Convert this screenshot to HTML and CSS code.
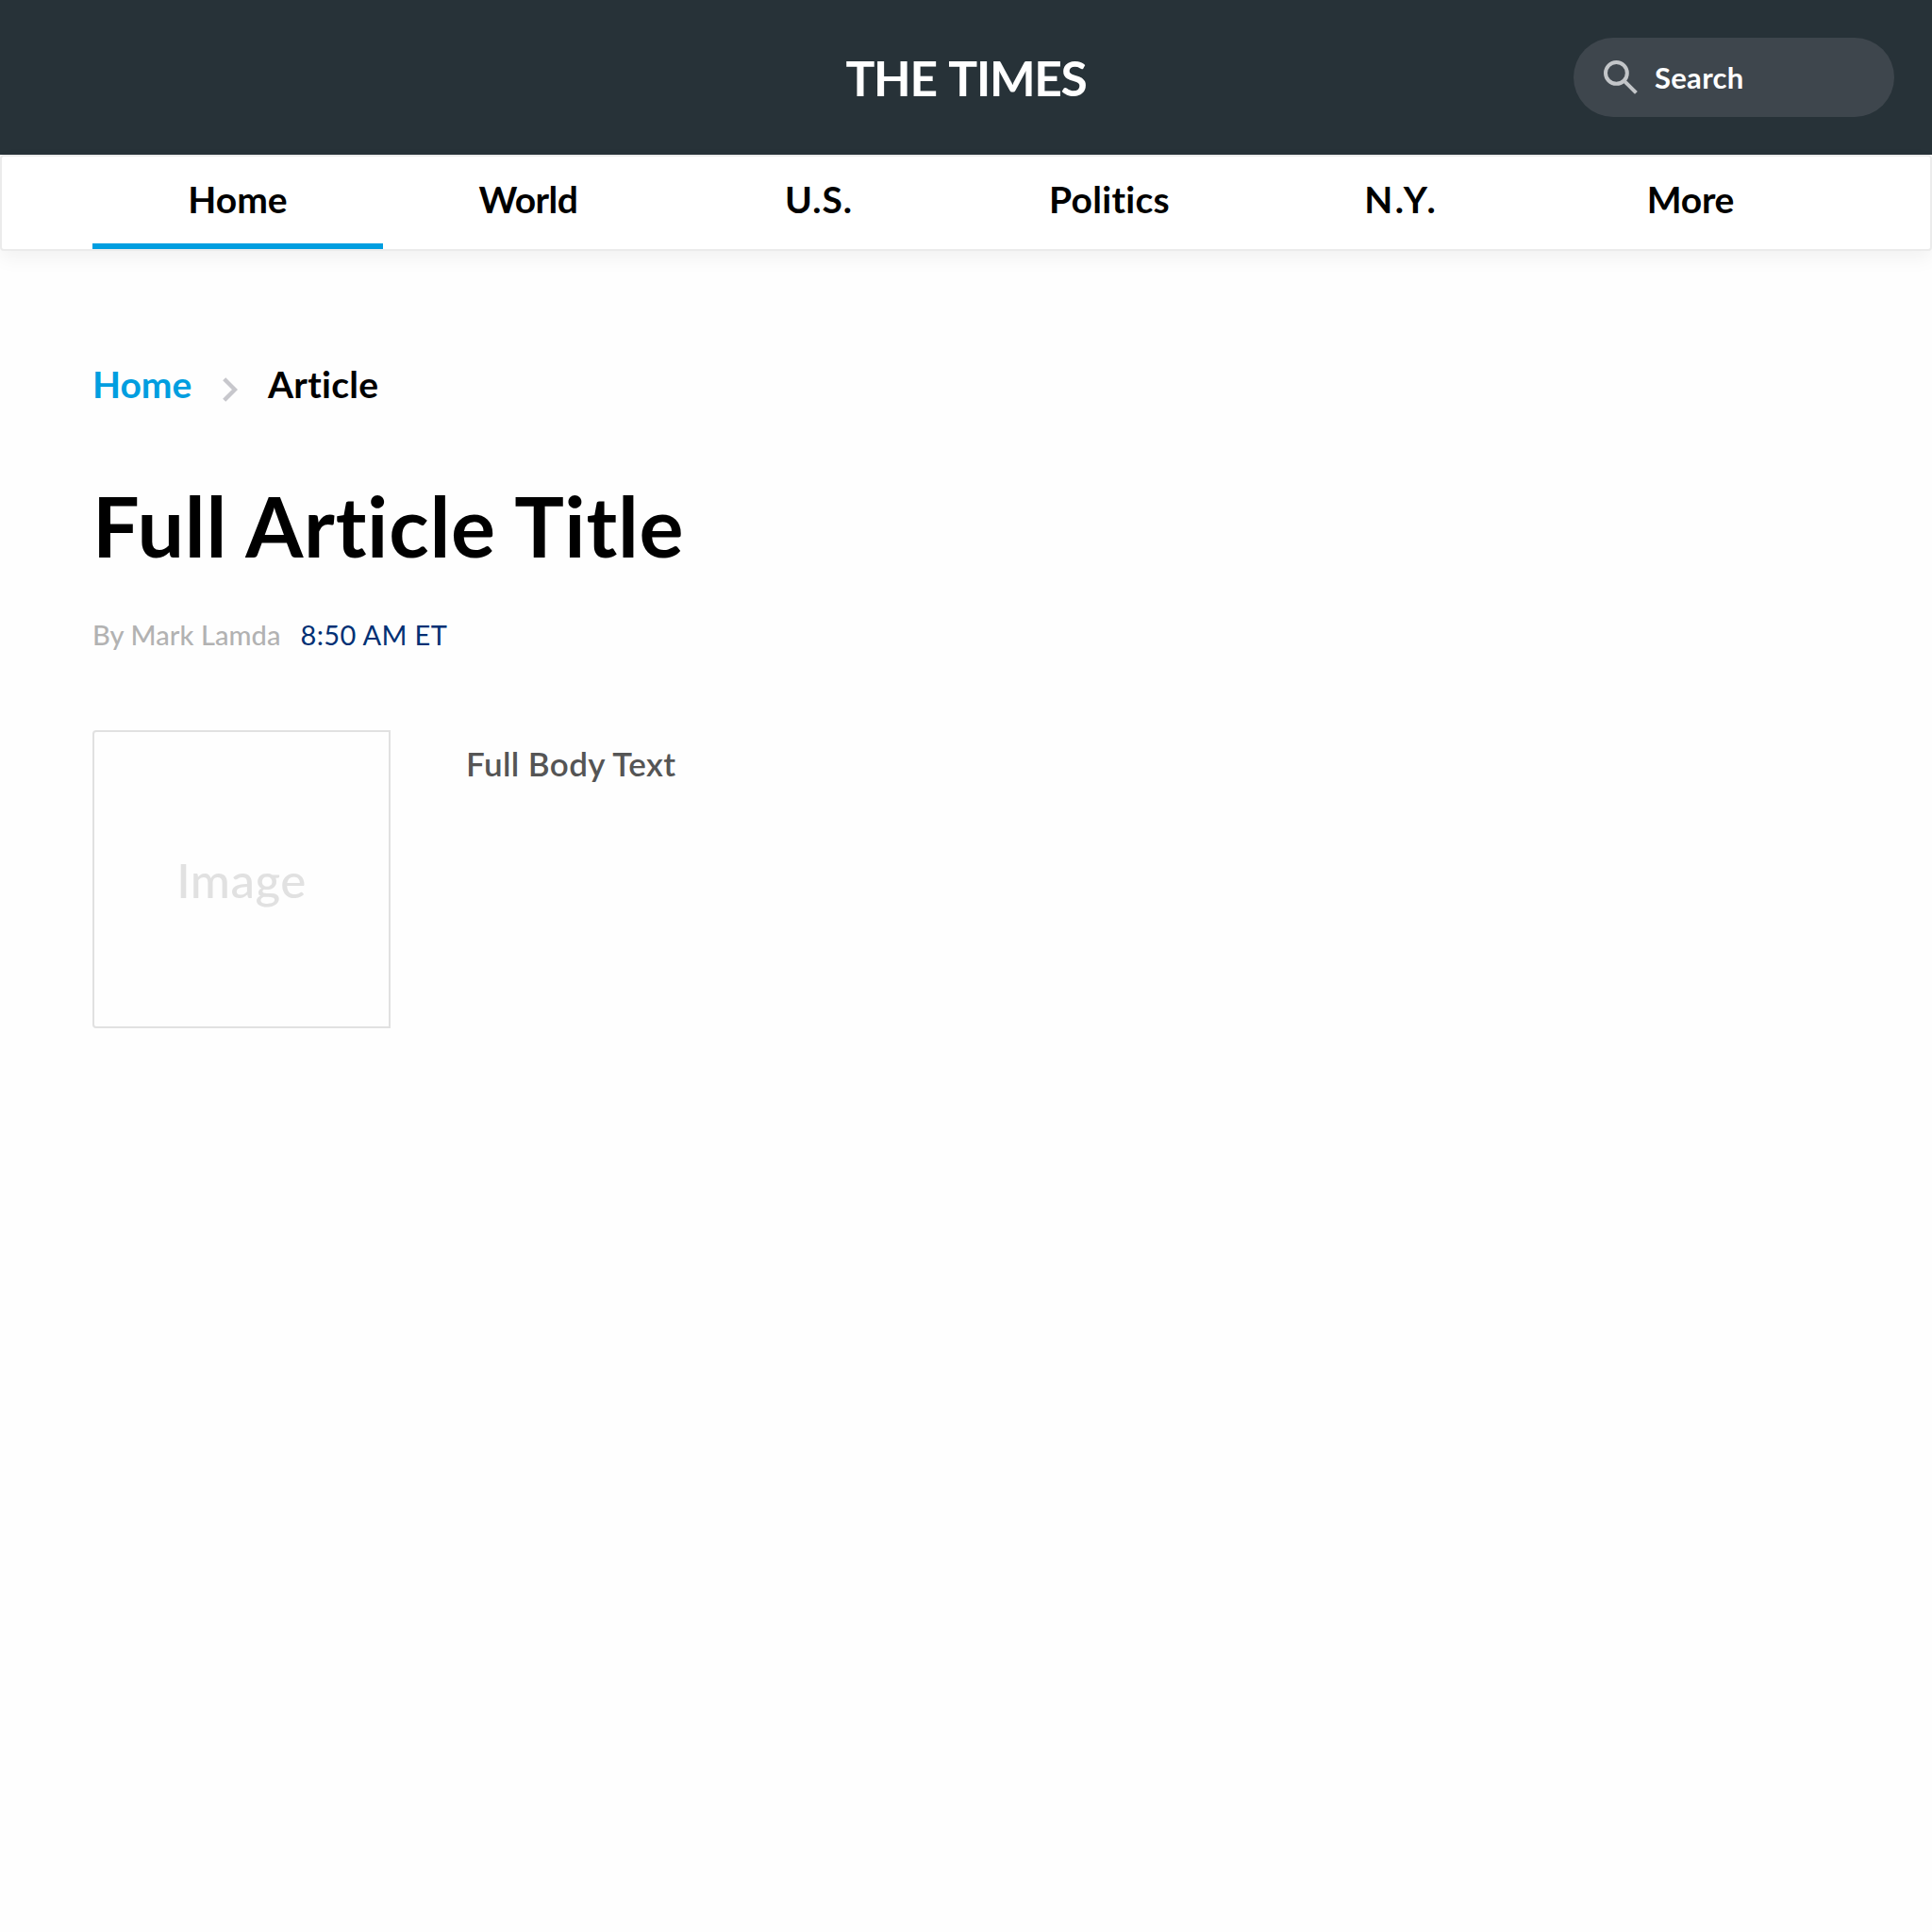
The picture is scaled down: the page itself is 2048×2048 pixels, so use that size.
FILE: index.html
```html
<!DOCTYPE html>
<html lang="en">
<head>
<meta charset="utf-8">
<title>The Times</title>
<link rel="stylesheet" href="styles.css">
</head>
<body>
<header class="header">
  <div class="brand">THE TIMES</div>
  <div class="search">
    <svg class="search-icon" viewBox="0 0 36 36" aria-hidden="true"><circle cx="13.4" cy="13.4" r="11.4"/><path d="M22.3 22.3L34.4 34.4"/></svg>
    <span>Search</span>
  </div>
</header>
<nav class="tabs">
  <a class="tab active">Home</a>
  <a class="tab world">World</a>
  <a class="tab us">U.S.</a>
  <a class="tab politics">Politics</a>
  <a class="tab ny">N.Y.</a>
  <a class="tab more">More</a>
</nav>
<main class="page">
  <div class="crumbs">
    <a class="crumb-link">Home</a>
    <svg class="chevron" viewBox="0 0 16 26" aria-hidden="true"><path d="M1.7 1.7L13 13L1.7 24.3"/></svg>
    <span class="crumb-current">Article</span>
  </div>
  <h1 class="title">Full Article Title</h1>
  <div class="byline"><span>By Mark Lamda</span><time class="time">8:50 AM ET</time></div>
  <div class="article">
    <div class="image">Image</div>
    <p class="body-text">Full Body Text</p>
  </div>
</main>
</body>
</html>
```
FILE: styles.css
```css
* {
  box-sizing: border-box;
}

body {
  margin: 0;
  min-height: 2048px;
  background: #fefefe;
  color: #000;
  font-family: Lato, sans-serif;
  font-weight: 700;
  font-variant-ligatures: none;
}

.header {
  display: grid;
  grid-template-columns: 1fr auto 1fr;
  align-items: center;
  height: 164px;
  padding: 0 40px;
  background: #273238;
  color: #fff;
}

.brand {
  grid-column: 2;
  font-size: 51.5px;
  letter-spacing: -1.3px;
  word-spacing: 3px;
}

.search {
  display: flex;
  align-items: center;
  justify-self: end;
  gap: 18px;
  width: 340px;
  height: 84px;
  padding-left: 32px;
  border-radius: 42px;
  background: #3e464d;
  font-size: 31px;
  letter-spacing: 0.3px;
}

.search-icon {
  width: 36px;
  height: 36px;
  fill: none;
  stroke: #c3c6c9;
  stroke-width: 4;
}

.tabs {
  display: flex;
  height: 102px;
  padding: 0 96px;
  border: 2px solid #ebebeb;
  border-radius: 4px;
  background: #fff;
  box-shadow: 0 8px 20px rgba(0, 0, 0, 0.05);
}

.tab {
  display: flex;
  align-items: center;
  justify-content: center;
  width: 308px;
  padding-bottom: 2px;
  border-bottom: 6px solid transparent;
  font-size: 39px;
}

.active {
  border-bottom-color: #009ee0;
}

.world {
  letter-spacing: -0.5px;
}

.us {
  letter-spacing: 0.95px;
}

.politics {
  letter-spacing: 0.3px;
}

.ny {
  letter-spacing: 2.7px;
  text-indent: 2.7px;
}

.more {
  letter-spacing: -0.3px;
}

.page {
  padding: 117px 98px 0;
}

.crumbs {
  display: flex;
  align-items: center;
  height: 48px;
  font-size: 39px;
  line-height: 48px;
}

.crumb-link {
  width: 138px;
  color: #009ee0;
}

.chevron {
  width: 16px;
  height: 26px;
  margin: 12px 32px 0 0;
  fill: none;
  stroke: #c7c7cc;
  stroke-width: 4.4;
}

.crumb-current {
  letter-spacing: 0.3px;
}

.title {
  margin: 73px 0 45px;
  font-size: 88px;
  line-height: 106px;
  letter-spacing: 0.75px;
}

.byline {
  display: flex;
  gap: 21px;
  color: #b2b2b2;
  font-size: 29px;
  font-weight: 500;
  line-height: 36px;
  letter-spacing: 0.1px;
}

.time {
  color: #003074;
  font-weight: 400;
  letter-spacing: 0.35px;
}

.article {
  display: flex;
  gap: 80px;
  margin-top: 83px;
}

.image {
  display: flex;
  align-items: center;
  justify-content: center;
  width: 316px;
  height: 316px;
  border: 2px solid #e1e1e1;
  border-radius: 4px 0 0 4px;
  color: #e1e1e1;
  font-size: 51px;
  font-weight: 500;
  letter-spacing: 0.5px;
}

.body-text {
  margin: 14px 0 0;
  color: #555;
  font-size: 35px;
  font-weight: 600;
  line-height: 42px;
  letter-spacing: 0.4px;
}
```
